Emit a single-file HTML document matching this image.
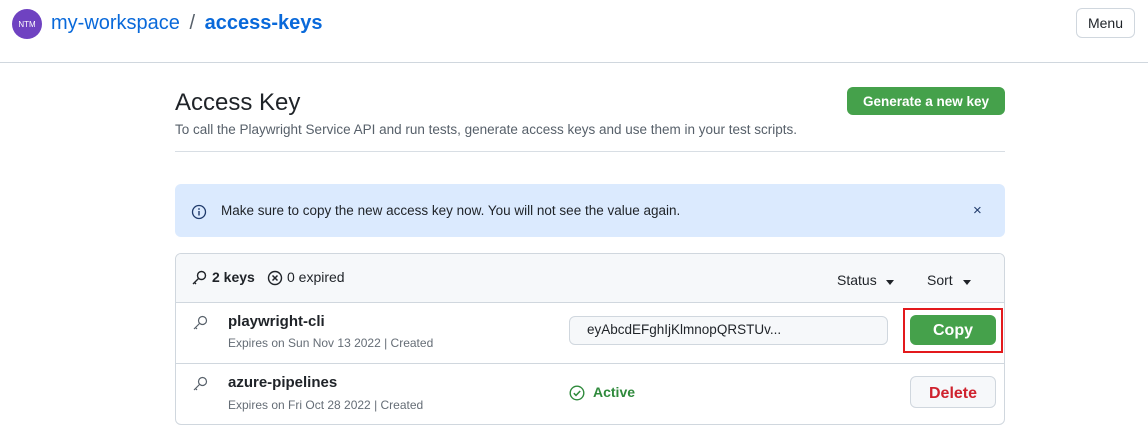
<!DOCTYPE html>
<html><head><meta charset="utf-8"><style>
*{box-sizing:border-box;margin:0;padding:0}
body{width:1148px;height:438px;background:#fff;font-family:"Segoe UI","Liberation Sans",sans-serif;color:#1f2328;position:relative;overflow:hidden}
.a{position:absolute;white-space:nowrap}
.btn{position:absolute;border-radius:6px;display:flex;align-items:center;justify-content:center;font-weight:bold}
</style></head><body>
<div class="a" style="left:12px;top:9px;width:30px;height:30px;border-radius:50%;background:#6f42c1;color:#fff;font-size:8px;display:flex;align-items:center;justify-content:center">NTM</div>
<div class="a" style="left:51px;top:12px;font-size:20px;color:#0969da">my-workspace <span style="color:#57606a;margin:0 4px">/</span> <b>access-keys</b></div>
<div class="btn" style="left:1076px;top:8px;width:59px;height:30px;border:1px solid #d0d7de;font-size:14px;font-weight:normal;color:#1f2328;background:#fff">Menu</div>
<div class="a" style="left:0;top:62px;width:1148px;height:1px;background:#d0d7de"></div>

<div class="a" style="left:175px;top:89px;font-size:24px;color:#1f2328">Access Key</div>
<div class="a" style="left:175px;top:122px;font-size:13.5px;color:#57606a">To call the Playwright Service API and run tests, generate access keys and use them in your test scripts.</div>
<div class="btn" style="left:847px;top:87px;width:158px;height:28px;background:#45a14b;color:#fff;font-size:13.5px">Generate a new key</div>
<div class="a" style="left:175px;top:151px;width:830px;height:1px;background:#d8dee4"></div>

<div class="a" style="left:175px;top:184px;width:830px;height:53px;background:#dbeafe;border-radius:6px"></div>
<svg class="a" style="left:191px;top:204px" width="16" height="16" viewBox="0 0 16 16"><circle cx="8" cy="8" r="6.5" fill="none" stroke="#1f3a6b" stroke-width="1.3"/><rect x="7.3" y="7" width="1.4" height="4.5" fill="#1f3a6b"/><circle cx="8" cy="5" r=".9" fill="#1f3a6b"/></svg>
<div class="a" style="left:221px;top:203px;font-size:13.5px;color:#1f2328">Make sure to copy the new access key now. You will not see the value again.</div>
<div class="a" style="left:973px;top:202px;font-size:15px;color:#1f3a6b">×</div>

<div class="a" style="left:175px;top:253px;width:830px;height:172px;border:1px solid #d0d7de;border-radius:6px;overflow:hidden">
 <div style="height:49px;background:#f6f8fa;border-bottom:1px solid #d0d7de"></div>
 <div style="height:61px;border-bottom:1px solid #d0d7de"></div>
</div>
<svg class="a" style="left:191px;top:270px" width="16" height="16" viewBox="0 0 16 16"><circle cx="10.5" cy="5.5" r="4" fill="none" stroke="#1f2328" stroke-width="1.4"/><path d="M7.5 8.5 L2 14 M3.5 12.5 L5 14" stroke="#1f2328" stroke-width="1.4" fill="none"/></svg>
<div class="a" style="left:212px;top:269px;font-size:14px;font-weight:bold">2 keys</div>
<svg class="a" style="left:267px;top:270px" width="16" height="16" viewBox="0 0 16 16"><circle cx="8" cy="8" r="6.5" fill="none" stroke="#1f2328" stroke-width="1.4"/><path d="M5.5 5.5l5 5M10.5 5.5l-5 5" stroke="#1f2328" stroke-width="1.5"/></svg>
<div class="a" style="left:287px;top:269px;font-size:14px">0 expired</div>
<div class="a" style="left:837px;top:272px;font-size:14px">Status</div>
<div class="a" style="left:886px;top:280px;border:4px solid transparent;border-top:5px solid #1f2328"></div>
<div class="a" style="left:927px;top:272px;font-size:14px">Sort</div>
<div class="a" style="left:963px;top:280px;border:4px solid transparent;border-top:5px solid #1f2328"></div>

<svg class="a" style="left:192px;top:315px" width="16" height="16" viewBox="0 0 16 16"><circle cx="10.5" cy="5.5" r="4" fill="none" stroke="#57606a" stroke-width="1.2"/><path d="M7.5 8.5 L2 14 M3.5 12.5 L5 14" stroke="#57606a" stroke-width="1.2" fill="none"/></svg>
<div class="a" style="left:228px;top:313px;font-size:15px;font-weight:600">playwright-cli</div>
<div class="a" style="left:228px;top:336px;font-size:12px;color:#656d76">Expires on Sun Nov 13 2022 | Created</div>
<div class="a" style="left:569px;top:316px;width:319px;height:29px;border:1px solid #d0d7de;border-radius:6px;background:#f6f8fa;font-size:13.5px;padding:5px 0 0 17px">eyAbcdEFghIjKlmnopQRSTUv...</div>
<div class="a" style="left:903px;top:308px;width:100px;height:45px;border:2px solid #e3191c"></div>
<div class="btn" style="left:910px;top:315px;width:86px;height:30px;background:#45a14b;color:#fff;font-size:16px;padding-top:2px">Copy</div>

<svg class="a" style="left:192px;top:376px" width="16" height="16" viewBox="0 0 16 16"><circle cx="10.5" cy="5.5" r="4" fill="none" stroke="#57606a" stroke-width="1.2"/><path d="M7.5 8.5 L2 14 M3.5 12.5 L5 14" stroke="#57606a" stroke-width="1.2" fill="none"/></svg>
<div class="a" style="left:228px;top:374px;font-size:15px;font-weight:600">azure-pipelines</div>
<div class="a" style="left:228px;top:398px;font-size:12px;color:#656d76">Expires on Fri Oct 28 2022 | Created</div>
<svg class="a" style="left:569px;top:385px" width="16" height="16" viewBox="0 0 16 16"><circle cx="8" cy="8" r="6.8" fill="none" stroke="#2f8a3c" stroke-width="1.4"/><path d="M4.8 8.2l2.2 2.2 4.2-4.4" fill="none" stroke="#2f8a3c" stroke-width="1.5"/></svg>
<div class="a" style="left:593px;top:384px;font-size:14px;font-weight:600;color:#2f8a3c">Active</div>
<div class="btn" style="left:910px;top:376px;width:86px;height:32px;border:1px solid #d0d7de;background:#f6f8fa;color:#cf222e;font-size:16px;font-weight:600;padding-top:3px">Delete</div>
</body></html>
